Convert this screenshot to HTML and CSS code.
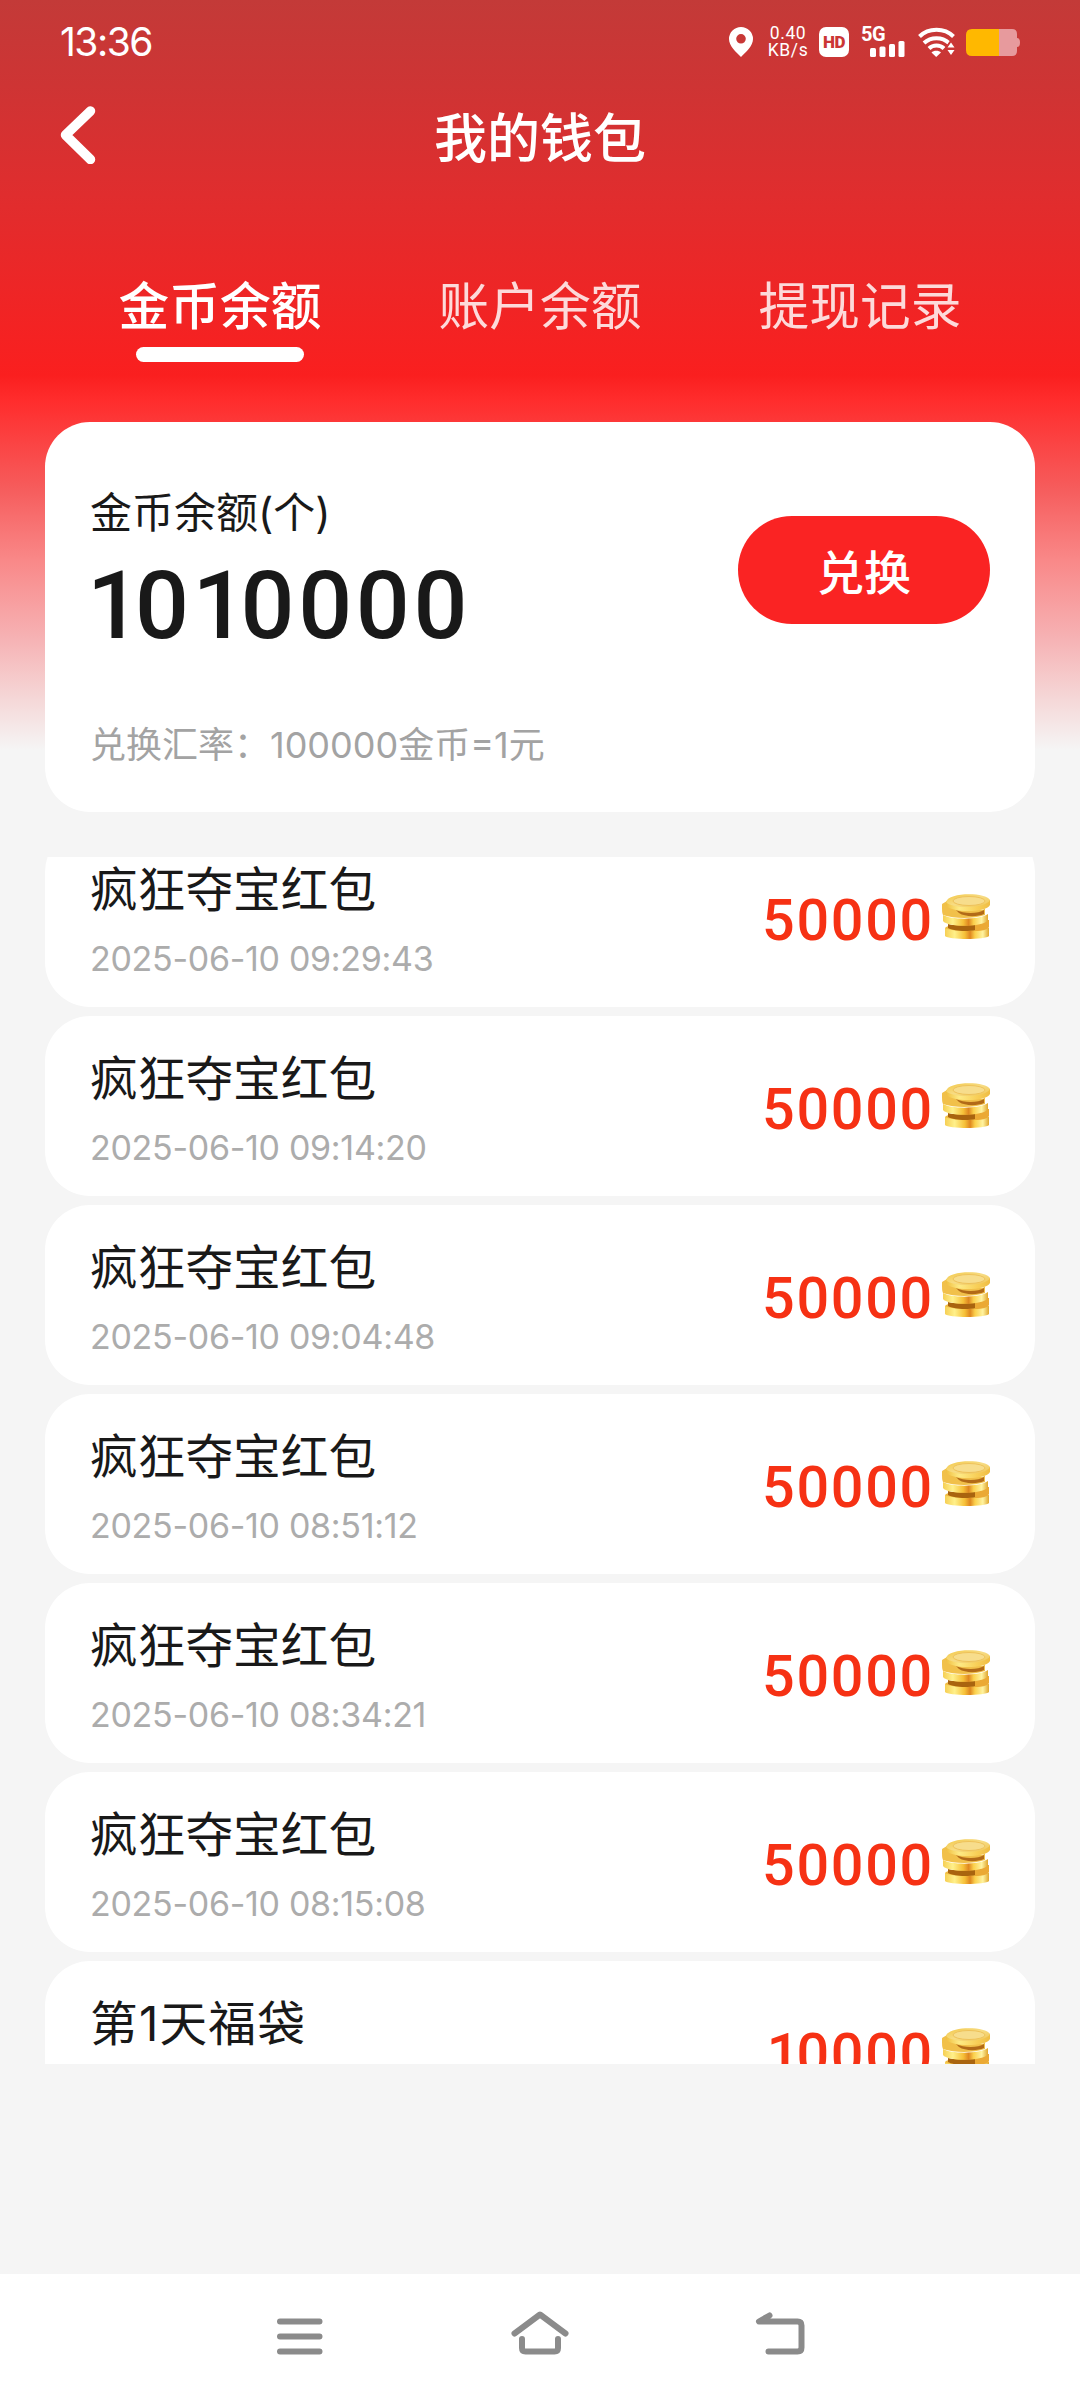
FILE: index.html
```
<!DOCTYPE html>
<html lang="zh-CN">
<head>
<meta charset="utf-8">
<title>我的钱包</title>
<link rel="stylesheet" href="styles.css">
</head>
<body>
<svg class="defs" width="0" height="0">
  <defs>
    <linearGradient id="edge" x1="0" x2="1" y1="0" y2="0">
      <stop offset="0" stop-color="#f6cf55"/><stop offset=".22" stop-color="#fff08a"/>
      <stop offset=".45" stop-color="#f6c038"/><stop offset=".57" stop-color="#df8620"/>
      <stop offset=".68" stop-color="#fbd04c"/><stop offset=".86" stop-color="#fff3a0"/>
      <stop offset="1" stop-color="#e0a62e"/>
    </linearGradient>
    <linearGradient id="rim" x1="0" x2="1" y1="0" y2="0">
      <stop offset="0" stop-color="#f0bf40"/><stop offset=".3" stop-color="#fdea85"/>
      <stop offset=".7" stop-color="#f8cf58"/><stop offset="1" stop-color="#efbd44"/>
    </linearGradient>
    <linearGradient id="face" x1="0" x2="1" y1="0" y2="1">
      <stop offset="0" stop-color="#f3c846"/><stop offset=".5" stop-color="#f7dc84"/><stop offset="1" stop-color="#f0c552"/>
    </linearGradient>
    <symbol id="coins" viewBox="0 0 48 45">
      <path d="M3 34v8c3 4 41 4 44 0v-8z" fill="url(#edge)"/>
      <path d="M3 34c4-5 38-5 44 0-5 4-38 4-44 0z" fill="#f1bb43"/>
      <path d="M6 30c8 2 22 2 28 0v6c-8 1.500-22 1.500-28-2z" fill="#a9640f"/>
      <path d="M33 26h14v7c-2 3-8 4-14 4z" fill="#eba934"/>
      <path d="M0 10l5-3c2 8 34 14 38 7v4c-6 6-36 6-42 2z" fill="#f1c04a"/>
      <path d="M0 11c0 4 0 8 1 10 12 4 30 4 42 0v-5z" fill="#f1c04a"/>
      <path d="M14 16c8 4 22 4 28 0v4c-7 3-19 3-25-1z" fill="#b26a18"/>
      <path d="M1 21c8 5 37 5 45-1v6c-3 7-40 8-45 1z" fill="url(#edge)"/>
      <path d="M4 7v4c4 8 40 8 44 0V6z" fill="url(#rim)"/>
      <path d="M4 8C6-2 44-2 48 6c-4 9-38 9-44 2z" fill="url(#face)"/>
      <ellipse cx="27" cy="7" rx="16" ry="4.500" fill="#f7dd8c" stroke="#eec25a"/>
    </symbol>
  </defs>
</svg>
<div class="screen">
  <div class="status">
    <span class="time">13:36</span>
    <div class="indicators">
      <svg class="pin" width="24" height="30" viewBox="0 0 24 30"><path fill="#fff" fill-rule="evenodd" d="M12 0a12 12 0 0 1 12 12c0 7-7 13-12 18C7 25 0 19 0 12A12 12 0 0 1 12 0zm0 7a4.800 4.800 0 1 0 0 9.600A4.800 4.800 0 0 0 12 7z"/></svg>
      <div class="speed"><span>0.40</span><span>KB/s</span></div>
      <span class="hd">HD</span>
      <div class="signal">
        <span class="net">5G</span>
        <svg width="36" height="16" viewBox="0 0 36 16"><g fill="#fff"><rect x="0" y="7" width="6" height="9" rx="1.500"/><rect x="9.500" y="5.500" width="6" height="10.500" rx="1.500"/><rect x="19" y="3" width="6" height="13" rx="1.500"/><rect x="28.500" y="0" width="6" height="16" rx="1.500"/></g></svg>
      </div>
      <svg class="wifi" width="37" height="30" viewBox="0 0 37 30"><g fill="none" stroke="#fff" stroke-width="4"><path d="M1.500 9.500c9-9 25-9 34 0"/><path d="M6 16c7-6.500 18-6.500 25 0"/><path d="M11 21.500c4-4 11-4 15 0"/></g><path fill="#fff" d="M13.500 25.500c2-2.500 7.500-2.500 9.500 0L18.200 30z"/><path fill="#cb3635" d="M33 12l6 9-6 9-6-9z"/><path fill="#fff" d="M29.500 20.500l3.500-5 3.500 5zM29.500 23h7l-3.500 5z"/></svg>
      <svg class="battery" width="54" height="27" viewBox="0 0 54 27"><path fill="#e79a9d" d="M32 0h14q5 0 5 5v4q3 0 3 4.500T51 18v4q0 5-5 5H32z"/><path fill="#ffb800" d="M6 0h27v27H6q-6 0-6-6V6q0-6 6-6z"/></svg>
    </div>
  </div>
  <header class="header">
    <svg class="back" width="36" height="58" viewBox="0 0 36 58"><path d="M30.500 5L5.500 29l25 24.500" fill="none" stroke="#fff" stroke-width="9.500" stroke-linecap="round" stroke-linejoin="round"/></svg>
    <h1>我的钱包</h1>
  </header>
  <nav class="tabs">
    <a class="tab active">金币余额</a>
    <a class="tab">账户余额</a>
    <a class="tab">提现记录</a>
  </nav>
  <section class="card">
    <div class="balance">
      <div class="label">金币余额(个)</div>
      <div class="total"><span class="one">1</span>0<span class="one">1</span>0000</div>
    </div>
    <button class="exchange">兑换</button>
    <div class="rate">兑换汇率：<span>100000</span>金币=1元</div>
  </section>
  <main class="list">
    <div class="row"><div><div class="name">疯狂夺宝红包</div><div class="date">2025-06-10 09:29:43</div></div><div class="amount">50000<svg><use href="#coins"/></svg></div></div>
    <div class="row"><div><div class="name">疯狂夺宝红包</div><div class="date">2025-06-10 09:14:20</div></div><div class="amount">50000<svg><use href="#coins"/></svg></div></div>
    <div class="row"><div><div class="name">疯狂夺宝红包</div><div class="date">2025-06-10 09:04:48</div></div><div class="amount">50000<svg><use href="#coins"/></svg></div></div>
    <div class="row"><div><div class="name">疯狂夺宝红包</div><div class="date">2025-06-10 08:51:12</div></div><div class="amount">50000<svg><use href="#coins"/></svg></div></div>
    <div class="row"><div><div class="name">疯狂夺宝红包</div><div class="date">2025-06-10 08:34:21</div></div><div class="amount">50000<svg><use href="#coins"/></svg></div></div>
    <div class="row"><div><div class="name">疯狂夺宝红包</div><div class="date">2025-06-10 08:15:08</div></div><div class="amount">50000<svg><use href="#coins"/></svg></div></div>
    <div class="row"><div><div class="name day">第1天福袋</div></div><div class="amount"><span class="lead">1</span>0000<svg><use href="#coins"/></svg></div></div>
  </main>
  <footer class="navbar">
    <svg width="60" height="50" viewBox="0 0 60 50"><path d="M10 10.500h39.500M10 25.500h39.500M10 40.500h39.500"/></svg>
    <svg width="60" height="50" viewBox="0 0 60 50"><path d="M4.500 22.500L30 3.500l25.500 19M12 28v9q0 3.500 3.500 3.500h29q3.500 0 3.500-3.500v-9"/></svg>
    <svg width="60" height="50" viewBox="0 0 60 50"><path d="M19.500 4.500L9 10.500h38.500q4 0 4 4v22q0 4-4 4H18.500"/></svg>
  </footer>
</div>
</body>
</html>
```
FILE: styles.css
```
* { box-sizing: border-box; margin: 0; padding: 0; }
body {
  width: 1080px;
  height: 2400px;
  overflow: hidden;
  font-family: Inter, "Noto Sans CJK SC", sans-serif;
  color: #191919;
}
.defs { position: absolute; }
.screen {
  height: 2400px;
  display: flex;
  flex-direction: column;
  background: #f5f5f5 linear-gradient(#c33a38 0, #ce3434 85px, #e02d2e 195px, #fa1f1f 375px, #ff2c2c 400px, #f65d5d 490px, #f98888 560px, #f6b3b5 640px, #f5d8d8 700px, #f5f5f5 750px) no-repeat;
}
.status {
  height: 84px;
  padding: 0 60px;
  display: flex;
  justify-content: space-between;
  align-items: center;
  color: #fff;
}
.time { font-size: 39px; line-height: 84px; letter-spacing: -1.500px; }
.indicators { display: flex; align-items: center; }
.speed {
  width: 40px;
  margin: 0 11px 0 15px;
  display: flex;
  flex-direction: column;
  align-items: center;
  font-family: Roboto, sans-serif;
  font-size: 17.500px;
  line-height: 17px;
  letter-spacing: .6px;
}
.hd {
  width: 30px;
  height: 30px;
  margin-right: 12px;
  border-radius: 7px;
  background: #fff;
  color: #cb3635;
  font: 900 17px/31px Roboto, sans-serif;
  letter-spacing: -.5px;
  text-align: center;
}
.signal { width: 45px; height: 30px; display: flex; flex-direction: column; }
.net { font: 700 20px/14px Roboto, sans-serif; letter-spacing: -.5px; }
.signal svg { margin-left: 9px; }
.wifi { margin: 0 11px 0 12px; }
.header {
  height: 104px;
  padding: 0 60px;
  display: grid;
  grid-template-columns: 36px 1fr 36px;
  align-items: center;
}
.back { margin-top: -2px; }
.header h1 {
  color: #fff;
  padding-top: 6px;
  font-size: 53px;
  line-height: 98px;
  font-weight: 500;
  text-align: center;
}
.tabs {
  margin-top: 75px;
  padding: 0 60px;
  display: grid;
  grid-template-columns: repeat(3, 1fr);
  height: 99px;
}
.tab {
  display: flex;
  flex-direction: column;
  align-items: center;
  padding-top: 4px;
  color: rgba(255, 255, 255, .83);
  font-size: 50.700px;
  line-height: 80px;
}
.tab.active { color: #fff; font-weight: 500; }
.tab.active::after {
  content: "";
  width: 168px;
  height: 15px;
  border-radius: 8px;
  background: #fff;
}
.card {
  margin: 60px 45px 45px;
  height: 390px;
  padding: 60px 45px 0;
  border-radius: 45px;
  background: #fff;
  display: grid;
  grid-template-columns: 1fr 252px;
  grid-template-rows: 176px 1fr;
}
.label { font-size: 42px; line-height: 62px; }
.total { margin-left: -3px; font-family: Roboto, sans-serif; font-size: 95px; line-height: 123px; font-weight: 500; letter-spacing: 3.600px; }
.one { letter-spacing: -6px; }
.exchange {
  margin-top: 34px;
  height: 108px;
  border: 0;
  border-radius: 54px;
  background: #fa2323;
  color: #fff;
  font: 500 47px/108px "Noto Sans CJK SC", sans-serif;
}
.rate { grid-column: span 2; margin-top: 61px; font-size: 36px; line-height: 52px; color: #a3a3a3; }
.list {
  height: 1207px;
  margin: 0 45px;
  display: flex;
  flex-direction: column;
  justify-content: flex-start;
  gap: 9px;
  overflow: hidden;
}
.row {
  flex: none;
  height: 180px;
  padding: 0 45px;
  border-radius: 45px;
  background: #fff;
  display: flex;
  justify-content: space-between;
}
.row:first-child { margin-top: -30px; }
.name { padding-top: 27px; font-size: 47.700px; line-height: 72px; }
.name.day { letter-spacing: 1.200px; }
.date { margin-top: 13px; font-size: 34px; line-height: 40px; letter-spacing: -.3px; color: #acacac; }
.amount {
  height: 180px;
  display: flex;
  align-items: center;
  color: #f63114;
  font-family: Roboto, sans-serif;
  font-size: 57.500px;
  font-weight: 500;
  letter-spacing: 1.700px;
  padding-top: 7px;
}
.lead { letter-spacing: -3px; }
.amount svg { width: 48px; height: 45px; margin: -9px 0 0 8px; }
.navbar {
  margin-top: auto;
  height: 126px;
  padding: 0 180px;
  background: #fff;
  display: grid;
  grid-template-columns: repeat(3, 1fr);
  justify-items: center;
  align-items: center;
}
.navbar svg { margin-top: -2px; fill: none; stroke: #8b8b8b; stroke-width: 6; stroke-linecap: round; stroke-linejoin: round; }
```
